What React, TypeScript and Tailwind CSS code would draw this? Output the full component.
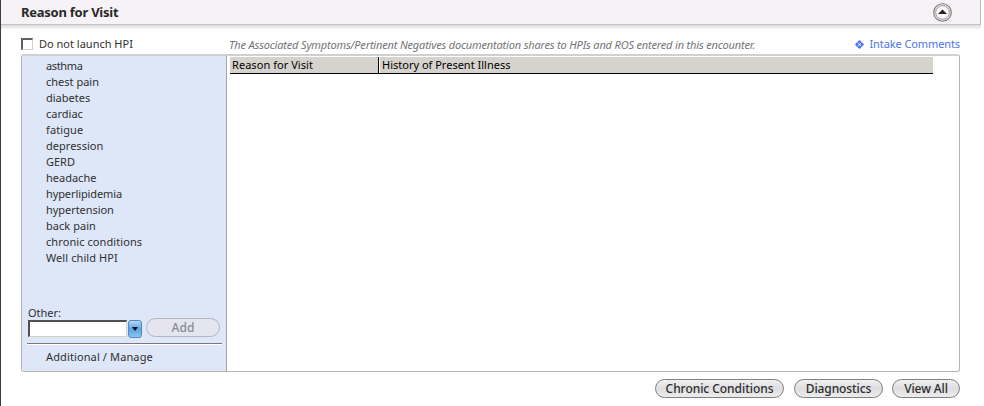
import React from 'react';
import { clsx } from 'clsx';

const REASONS = [
  { label: 'asthma', tracking: 'tracking-[-0.35px]' },
  { label: 'chest pain', tracking: 'tracking-[0px]' },
  { label: 'diabetes', tracking: 'tracking-[0px]' },
  { label: 'cardiac', tracking: 'tracking-[0px]' },
  { label: 'fatigue', tracking: 'tracking-[0.1px]' },
  { label: 'depression', tracking: 'tracking-[0.02px]' },
  { label: 'GERD', tracking: 'tracking-[0px]' },
  { label: 'headache', tracking: 'tracking-[0px]' },
  { label: 'hyperlipidemia', tracking: 'tracking-[-0.1px]' },
  { label: 'hypertension', tracking: 'tracking-[-0.05px]' },
  { label: 'back pain', tracking: 'tracking-[0.05px]' },
  { label: 'chronic conditions', tracking: 'tracking-[0.08px]' },
  { label: 'Well child HPI', tracking: 'tracking-[0.08px]' },
];

function CollapseIcon() {
  return (
    <svg width="20" height="20" viewBox="0 0 20 20">
      <circle cx="10.5" cy="10.5" r="8.8" fill="#f4f3f4" stroke="#777777" strokeWidth="1.1" />
      <circle cx="10.5" cy="10.5" r="6.9" fill="#f7f5f7" stroke="#969696" strokeWidth="1" />
      <path d="M6 12 L10.5 7.6 L15 12 Z" fill="#222222" />
    </svg>
  );
}

function DiamondsIcon() {
  return (
    <svg width="9" height="9" viewBox="0 0 9 9" fill="#4c73f0">
      <path d="M4.5 0 L6.9 2.3 L4.5 3.8 L2.1 2.3 Z" />
      <path d="M4.5 5.2 L6.9 6.7 L4.5 9 L2.1 6.7 Z" />
      <path d="M0 4.5 L2.3 2.1 L3.8 4.5 L2.3 6.9 Z" />
      <path d="M5.2 4.5 L6.7 2.1 L9 4.5 L6.7 6.9 Z" />
    </svg>
  );
}

function PillButton({ label, className }: { label: string; className: string }) {
  return (
    <button
      className={clsx(
        'flex h-[19px] items-center justify-center whitespace-nowrap rounded-full border-[1.5px] border-[#808080] bg-linear-to-b from-[#f0f0f2] via-[#dedee1] to-[#ececee] text-[12px] font-medium leading-none text-[#2c2c2c]',
        className
      )}
    >
      {label}
    </button>
  );
}

function Sidebar() {
  return (
    <div className="flex w-[205px] shrink-0 flex-col rounded-l-[2px] border-r border-[#a3a5aa] bg-[#dde7f7]">
      <ul className="h-[249px] pl-6 pt-[2px]">
        {REASONS.map(({ label, tracking }) => (
          <li key={label} className={clsx('h-4 whitespace-nowrap leading-4', tracking)}>
            {label}
          </li>
        ))}
      </ul>

      <div className="h-[14px] pl-[6px] leading-[15px]">Other:</div>
      <div className="flex h-[20px] items-start pl-[6px]">
        <input className="mt-px h-[17px] w-[99px] border-b border-l-2 border-r border-t-2 border-b-[#d4d0c8] border-l-[#505050] border-r-[#d4d0c8] border-t-[#505050] bg-white outline-none" />
        <button className="ml-[1px] mt-px flex h-[18px] w-[14px] items-center justify-center rounded-[3px] border border-[#5389bf] bg-linear-to-b from-[#b4daf7] via-[#5ba2df] to-[#89c3f2]">
          <svg width="6" height="4" viewBox="0 0 6 4">
            <path d="M0 0 H6 L3 4 Z" fill="#07101c" />
          </svg>
        </button>
        <button className="-mt-px ml-[4px] flex h-[19px] w-[74px] items-center justify-center rounded-full border border-[#b4b5bd] bg-[#e4e5ef] text-[12px] font-medium leading-none tracking-[0.1px] text-[#898b93]">
          Add
        </button>
      </div>

      <div className="ml-[5px] mr-[4px] mt-[4px] h-[2px] border-t border-[#77797e] bg-white" />
      <div className="mt-[4px] pl-6 leading-4 tracking-[0.12px]">Additional / Manage</div>
    </div>
  );
}

export default function App(): React.JSX.Element {
  return (
    <div className="h-[406px] w-[984px] overflow-hidden border-l border-[#3c3c3c] bg-white font-['Noto_Sans','Open_Sans',sans-serif] text-[11px] text-[#303030]">
      <header className="flex h-[25px] w-[980px] items-center justify-between border-b border-r border-b-[#c5c2c5] border-r-[#bdbabd] bg-[#f6f2f6] pl-5 pr-[28px]">
        <h1 className="whitespace-nowrap text-[13px] font-bold leading-none tracking-[-0.25px] text-[#292929]">Reason for Visit</h1>
        <CollapseIcon />
      </header>
      <div className="h-[5px] w-[980px] bg-linear-to-b from-[#dedadd] to-white" />

      <div className="flex h-[24px] w-[959px] items-start pl-5 pt-[6px]">
        <label className="flex w-[208px] items-center leading-4">
          <span className="-mt-px h-[12px] w-[12px] border-b border-l-2 border-r border-t-2 border-b-[#d4d0c8] border-l-[#606060] border-r-[#d4d0c8] border-t-[#606060] bg-white" />
          <span className="ml-[6px] whitespace-nowrap">Do not launch HPI</span>
        </label>
        <p className="whitespace-nowrap pt-[1px] italic leading-4 tracking-[-0.17px] text-[#747474]">
          The Associated Symptoms/Pertinent Negatives documentation shares to HPIs and ROS entered in this encounter.
        </p>
        <a className="ml-auto flex items-center whitespace-nowrap leading-4 tracking-[-0.1px] text-[#4c73f0]">
          <DiamondsIcon />
          <span className="ml-[5px]">Intake Comments</span>
        </a>
      </div>

      <main className="ml-5 flex h-[318px] w-[939px] rounded-[3px] border border-t-2 border-[#b3b4b6] border-t-[#cfd1d1]">
        <Sidebar />
        <section className="flex-1 pl-[3px] pt-px">
          <div className="flex h-[17px] w-[703px] border-b border-black bg-[#d6d3ce] leading-4 text-black">
            <div className="w-[149px] whitespace-nowrap border-r border-black pl-[2px] tracking-[0.05px]">Reason for Visit</div>
            <div className="flex-1 whitespace-nowrap border-l border-white pl-[2px]">History of Present Illness</div>
          </div>
        </section>
      </main>

      <footer className="flex w-[959px] justify-end pt-[7px]">
        <PillButton label="Chronic Conditions" className="w-[129px] tracking-[-0.05px]" />
        <PillButton label="Diagnostics" className="ml-[10px] w-[89px] tracking-[-0.1px]" />
        <PillButton label="View All" className="ml-[9px] w-[68px] tracking-[-0.1px]" />
      </footer>
    </div>
  );
}
